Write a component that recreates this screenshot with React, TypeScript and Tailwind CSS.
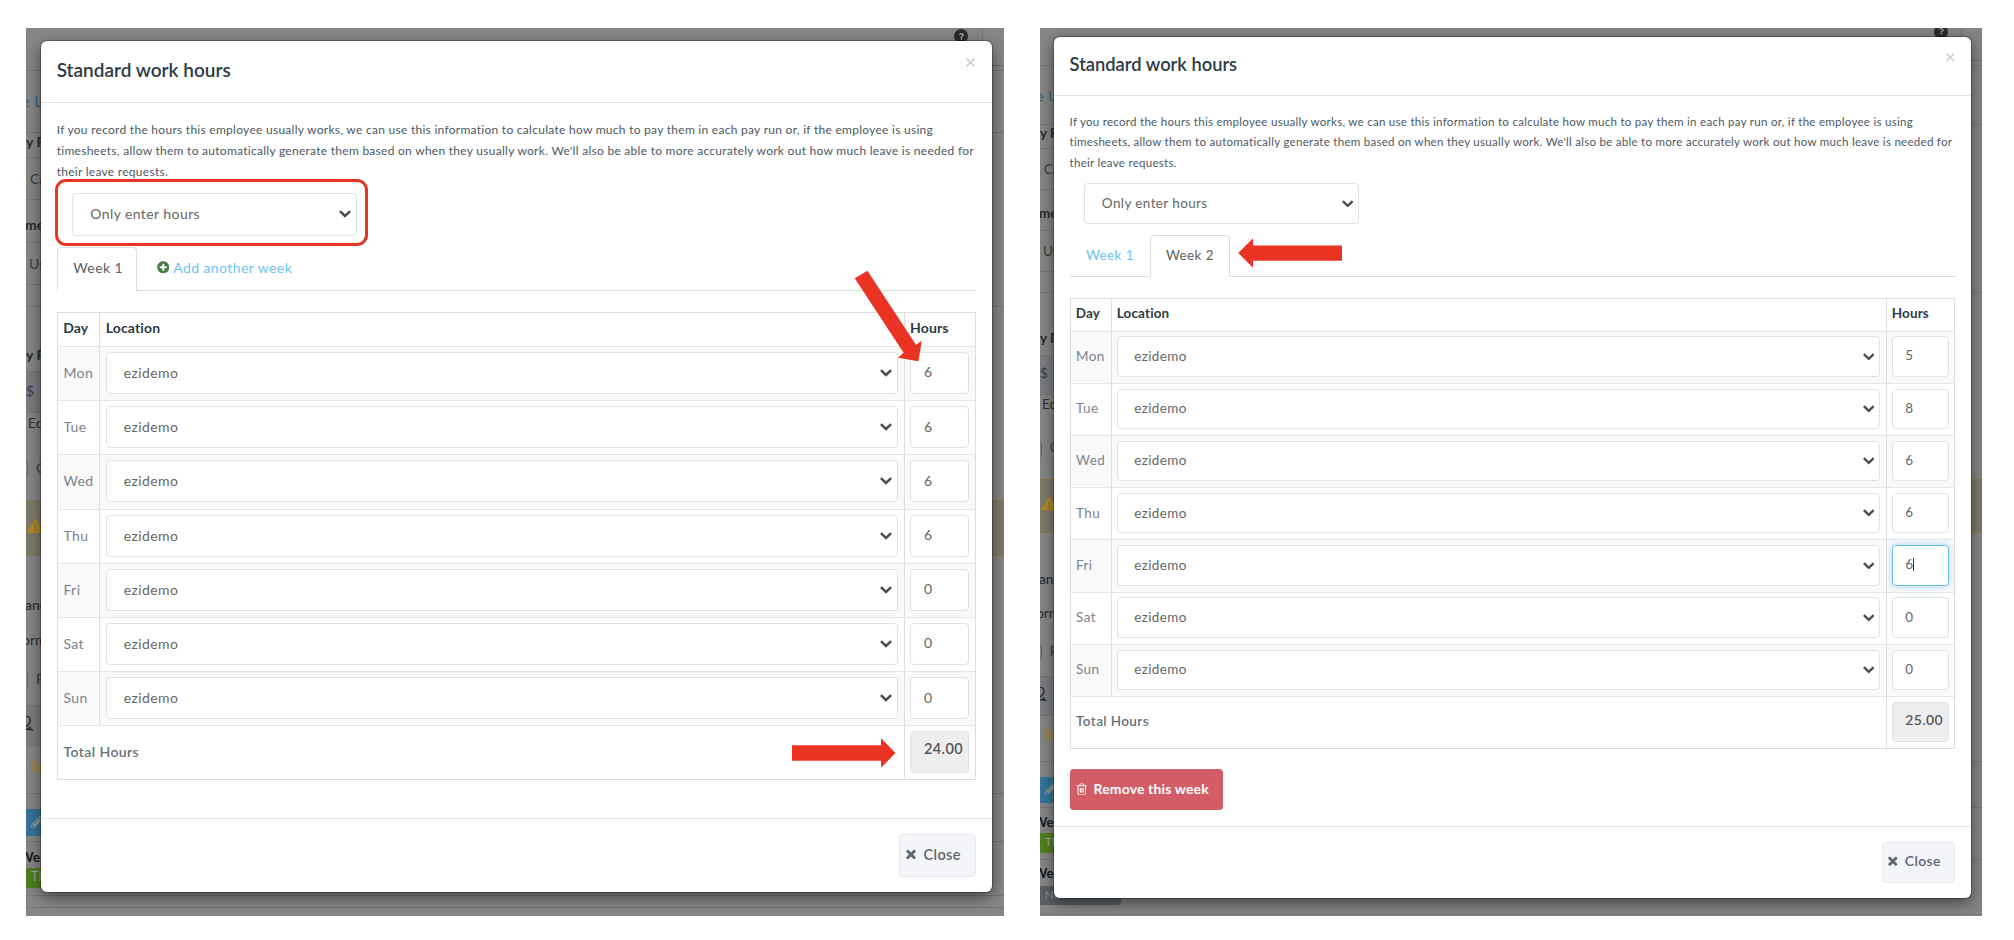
import clsx from 'clsx'
import type { ReactNode } from 'react'
import { FaPlusCircle, FaTimes, FaQuestion, FaExclamationTriangle, FaPencilAlt } from 'react-icons/fa'

const DAYS = ['Mon', 'Tue', 'Wed', 'Thu', 'Fri', 'Sat', 'Sun']

type PageRow = { h: number; pt: number; text?: string; pl?: number; line?: boolean; row?: string; tone?: string; icon?: ReactNode }

// The employee page that shows around the dialog
const PAGE_ROWS: PageRow[] = [
  { h: 43, pt: 0, line: true },
  { h: 62, pt: 24, pl: -4, text: 'e L', line: true, tone: 'text-[#2f6486] text-[14.5px] tracking-[0.5px]' },
  { h: 25, pt: 2, pl: 0, text: 'y P', line: true, row: 'w-[60px]', tone: 'font-bold text-[#252d33]' },
  { h: 42, pt: 14, pl: 4, text: 'Ca', line: true, row: 'w-[60px]', tone: 'text-[#3b3d3e]' },
  { h: 43, pt: 18, pl: -1, text: 'me', line: true, row: 'w-[60px]', tone: 'font-bold text-[#252d33]' },
  { h: 42, pt: 14, pl: 3, text: 'Us', line: true, row: 'w-[60px]', tone: 'text-[#3b3d3e]' },
  { h: 22, pt: 0, line: true },
  { h: 65, pt: 41, pl: 0, text: 'y P', line: true, row: 'w-[60px]', tone: 'font-bold text-[#252d33]' },
  { h: 41, pt: 12, pl: 0, text: '$', line: true, row: 'w-[60px] bg-[#7b7d80]', tone: 'text-[#3b3d3e]' },
  { h: 44, pt: 3, pl: 2, text: 'Ed', tone: 'text-[#2b2e30]' },
  {
    h: 43,
    pt: 4,
    pl: -12,
    tone: 'text-[#3b3d3e]',
    text: 'C',
    icon: <span className="mr-2 inline-block h-[16px] w-[14px] rounded-[3px] border border-[#666]" />,
  },
  {
    h: 56,
    pt: 18,
    pl: 2,
    line: true,
    row: 'border-t bg-[#7f7b6b] !border-[#8a7a48]',
    icon: <FaExclamationTriangle className="h-[14px] w-[15px] shrink-0 text-[#b98a1c]" />,
  },
  { h: 74, pt: 42, pl: -1, text: 'and', tone: 'text-[#252d33] font-medium' },
  { h: 42, pt: 3, pl: -4, text: 'orm', tone: 'text-[#252d33]' },
  {
    h: 33,
    pt: 0,
    pl: -12,
    tone: 'text-[#3b3d3e]',
    text: 'F',
    icon: <span className="mr-2 inline-block h-[16px] w-[14px] rounded-[3px] border border-[#666]" />,
  },
  {
    h: 41,
    pt: 10,
    pl: -8,
    line: true,
    row: 'w-[60px] bg-[#7b7d80] border-t',
    icon: (
      <svg viewBox="0 0 16 18" className="h-[16px] w-[16px]" fill="none" stroke="#222a30" strokeWidth="1.6">
        <path d="M8 12C4 8 3 6 3 5a5 5 0 0 1 10 0c0 2-1 4-5 7z" />
        <path d="M11 12.5c3 .5 3.5 2-3 2.5 4 0 7 .5 8 1" />
      </svg>
    ),
  },
  { h: 48, pt: 13, pl: 4, text: 'Spl', line: true, tone: 'text-[#b0841c] font-medium' },
  { h: 15, pt: 0 },
  { h: 27, pt: 7, pl: 5, row: 'w-[60px] bg-[#35749a]', icon: <FaPencilAlt className="h-[12px] w-[12px] text-[#999]" /> },
  { h: 6, pt: 0, line: true },
  { h: 26, pt: 8, pl: -7, text: 'Wee', tone: 'font-bold text-[#14191d]' },
  { h: 20, pt: 2, pl: 5, text: 'TF', row: 'w-[60px] bg-[#4f801f]', tone: 'text-[#a5a5a5] text-[12.5px]' },
  { h: 8, pt: 0, line: true },
  { h: 12, pt: 0, line: true },
]

// With a second week the list of rosters has one more entry before the page is cut off
const EXTRA_ROWS: PageRow[] = [
  ...PAGE_ROWS.slice(0, -1),
  { h: 27, pt: 7, pl: -7, text: 'Wee', tone: 'font-bold text-[#14191d]' },
  { h: 19, pt: 2, pl: 5, text: 'No', row: 'bg-[#5b6066] w-[84px] rounded-r', tone: 'text-[#8b8f93] text-[12.5px]' },
  { h: 11, pt: 0, line: true },
]

function Chevron({ className }: { className?: string }) {
  return (
    <svg viewBox="0 0 12 8" className={clsx('h-[8px] w-[12px]', className)} fill="none" stroke="#4d4d4d" strokeWidth="2.5">
      <path d="M0.9 1.2 6 6l5.1-4.8" />
    </svg>
  )
}

function TrashIcon() {
  return (
    <svg viewBox="0 0 12 14" className="h-[13px] w-[12px]" fill="none" stroke="#fff" strokeWidth="1.1">
      <path d="M0.5 3h11M3.5 3c0-3 5-3 5 0M1.8 3.2v8.5c0 1 .5 1.6 1.4 1.6h5.6c.9 0 1.4-.6 1.4-1.6V3.2M4.4 5.5v5.3M6 5.5v5.3M7.6 5.5v5.3" />
    </svg>
  )
}

function PageBehind({ rows }: { rows: PageRow[] }) {
  return (
    <div className="flex flex-col text-[14px]">
      {rows.map((r, i) => (
        <div
          key={i}
          className={clsx('flex shrink-0 items-start overflow-hidden border-[#767676] leading-[14px]', r.line && 'border-b', r.row, r.tone)}
          style={{ height: r.h, paddingTop: r.pt }}
        >
          <span className="flex whitespace-nowrap" style={{ marginLeft: r.pl }}>
            {r.icon}
            {r.text}
          </span>
        </div>
      ))}
    </div>
  )
}

function Select({ label, className }: { label: string; className?: string }) {
  return (
    <div
      className={clsx(
        'flex items-center justify-between rounded-[4px] border-[1.5px] border-[#dbe3e8] bg-white text-[14px] tracking-[0.42px] text-[#666]',
        className,
      )}
    >
      <span className="pb-px">{label}</span>
      <Chevron />
    </div>
  )
}

type HoursDialogProps = {
  hours: number[]
  total: string
  focused?: number
  tabs: ReactNode
  removable?: boolean
}

function HoursDialog({ hours, total, focused, tabs, removable }: HoursDialogProps) {
  return (
    <div className="absolute left-[14.7px] top-[13px] w-[951.3px] rounded-[6px] bg-white shadow-[0_0_0_1px_rgba(0,0,0,0.25),0_5px_15px_rgba(0,0,0,0.5)]">
      <div className="flex h-[62px] justify-between border-b-[1.5px] border-[#e5e5e5] px-4">
        <h4 className="pt-[14.5px] text-[19px] font-semibold leading-[28px] text-[#2b3b47]">Standard work hours</h4>
        <svg viewBox="0 0 10 10" className="mr-[1px] mt-[17px] h-[9px] w-[9px]" stroke="#cfcfcf" strokeWidth="1.8">
          <path d="M0.6.6l8.8 8.8M9.4.6L.6 9.4" />
        </svg>
      </div>

      <div className="px-4 pt-[16px]">
        <p className="whitespace-nowrap text-[12px] leading-[21.2px] tracking-[0.275px] text-[#4c5964]">
          If you record the hours this employee usually works, we can use this information to calculate how much to pay them in each pay run or, if the employee is using
          <br />
          timesheets, allow them to automatically generate them based on when they usually work. We'll also be able to more accurately work out how much leave is needed for
          <br />
          their leave requests.
        </p>

        <Select label="Only enter hours" className="ml-[15.5px] mt-[10.2px] h-[43px] w-[285px] pl-[17px] pr-[5px]" />

        <div className="mt-[11px] flex h-[44px] text-[14px] tracking-[0.42px]">
          {tabs}
          <div className="flex-1 border-b-[1.5px] border-[#ddd]" />
        </div>

        <div className="mt-[21.7px] border-[1.5px] border-[#ddd] text-[14px] tracking-[0.42px]">
          <div className="flex h-[32.5px] font-bold leading-[30px] tracking-[0.15px] text-[#2b3b47]">
            <div className="w-[42.5px] border-r-[1.5px] border-[#ddd] pl-[5.5px]">Day</div>
            <div className="flex-1 pl-[5.5px]">Location</div>
            <div className="w-[71px] border-l-[1.5px] border-[#ddd] pl-[5px]">Hours</div>
          </div>
          {DAYS.map((day, i) => (
            <div key={day} className="flex h-[54.2px] border-t-[1.5px] border-[#e0e7ee] odd:bg-white even:bg-[#f9f9f9]">
              <div className="flex w-[42.5px] items-center border-r-[1.5px] border-[#ddd] pb-[2px] pl-[5.7px] text-[#7b838b]">{day}</div>
              <div className="flex-1 px-[6px] pt-[5px]">
                <Select label="ezidemo" className="h-[42px] pl-[16.5px] pr-[5px]" />
              </div>
              <div className="w-[71px] border-l-[1.5px] border-[#ddd] pl-[5px] pt-[5px]">
                <div
                  className={clsx(
                    'flex h-[42px] w-[59.5px] items-center rounded-[4px] border-[1.5px] bg-white pb-[2px] pl-[13px] text-[#666]',
                    focused === i ? 'border-[#66c0ee] shadow-[0_0_8px_rgba(102,175,233,0.5)]' : 'border-[#dbe3e8]',
                  )}
                >
                  {hours[i]}
                  {focused === i && <span className="h-[14px] w-px bg-[#333]" />}
                </div>
              </div>
            </div>
          ))}
          <div className="flex h-[54.2px] border-t-[1.5px] border-[#e0e7ee]">
            <div className="flex flex-1 items-center pb-[3px] pl-[5.7px] font-semibold text-[#66717b]">Total Hours</div>
            <div className="w-[71px] border-l-[1.5px] border-[#ddd] pl-[5px] pt-[5px]">
              <div className="h-[42px] w-[59.5px] rounded-[4px] border-[1.5px] border-[#dbe3e8] bg-[#eeeeee] pl-[13px] pt-[8px] text-[14.5px] font-semibold leading-[18px] tracking-[0.4px] text-[#555]">
                {total}
              </div>
            </div>
          </div>
        </div>

        {removable ? (
          <button className="mb-[16px] mt-[21px] flex h-[42.5px] w-[159px] items-center gap-[6.5px] rounded-[4px] bg-[#d25d67] pb-[2px] pl-[6.5px] text-[14.5px] font-bold tracking-[0.15px] text-white">
            <TrashIcon />
            Remove this week
          </button>
        ) : (
          <div className="h-[37.5px]" />
        )}
      </div>

      <div className="flex h-[74.5px] justify-end border-t-[1.5px] border-[#e5e5e5] px-4 pt-[15.5px]">
        <button className="flex h-[43px] w-[76.5px] items-center gap-[7px] rounded-[4px] border-[1.5px] border-[#e4e9ee] bg-[#f4f5f8] pb-[2px] pl-[6px] text-[14.5px] font-semibold tracking-[0.4px] text-[#5b6670]">
          <FaTimes className="h-[13px] w-[10px]" strokeWidth={30} stroke="currentColor" />
          Close
        </button>
      </div>
    </div>
  )
}

function HelpCorner() {
  return (
    <div className="absolute right-0 top-0 flex w-[50px] flex-col">
      <div className="flex h-[38px] border-b border-[#6c6c6c]">
        <span className="mt-[1px] flex h-[14px] w-[14px] items-center justify-center rounded-full bg-[#2b2b2b]">
          <FaQuestion className="h-[7px] w-[7px] text-[#999]" />
        </span>
        <div className="ml-[14px] flex-1 border-l border-[#767676]" />
      </div>
    </div>
  )
}

export default function App() {
  return (
    <div className="flex h-[940px] w-[2014px] bg-white pl-[26px] pt-[28px] font-[Lato,'Open_Sans',sans-serif]">
      <section className="relative h-[888px] w-[978px] overflow-hidden bg-[#868686]">
        <PageBehind rows={PAGE_ROWS} />
        <HelpCorner />
        <HoursDialog
          hours={[6, 6, 6, 6, 0, 0, 0]}
          total="24.00"
          tabs={
            <>
              <div className="w-[80.5px] rounded-t-[4px] border-[1.5px] border-b-0 border-[#ddd] pl-[15.5px] pt-[10px] leading-[20px] text-[#606060]">
                Week 1
              </div>
              <div className="flex border-b-[1.5px] border-[#ddd] pl-[19.5px] pt-[11px] leading-[20px] text-[#6cc3f2]">
                <FaPlusCircle className="mr-[4px] mt-[3px] h-[12.5px] w-[12.5px] text-[#477b41]" />
                <span>Add another week</span>
              </div>
            </>
          }
        />
        <div className="absolute left-[29px] top-[151px] h-[67px] w-[313px] rounded-[11px] border-[3px] border-[#ea3323]" />
        <svg className="absolute left-0 top-0 h-[888px] w-[978px]" fill="#ea3323">
          <path d="M841.4 242.7 828.7 250.3 877.6 324.7 872 329.7 892.4 333.3 895.8 312.7 890 316.7z" />
          <path d="M766 717.3H855V710.2L869.5 725 855 739.8V732.7H766z" />
        </svg>
      </section>

      <section className="relative ml-[36px] h-[888px] w-[942px] overflow-hidden bg-[#868686]">
        <div className="relative mt-[-4px] w-[978px] [zoom:0.9635]">
          <PageBehind rows={EXTRA_ROWS} />
          <HelpCorner />
          <HoursDialog
            hours={[5, 8, 6, 6, 6, 0, 0]}
            total="25.00"
            focused={4}
            removable
            tabs={
              <>
                <div className="w-[83.5px] border-b-[1.5px] border-[#ddd] pl-[17px] pt-[11px] leading-[20px] text-[#6cc3f2]">Week 1</div>
                <div className="w-[83px] rounded-t-[4px] border-[1.5px] border-b-0 border-[#ddd] pl-[15.5px] pt-[10px] leading-[20px] text-[#606060]">
                  Week 2
                </div>
              </>
            }
          />
        </div>
        <svg className="absolute left-0 top-0 h-[888px] w-[942px]" fill="#ea3323">
          <path d="M302 217.5H213V210.2L198.3 225 213 239.8V232.7H302z" />
        </svg>
      </section>
    </div>
  )
}
